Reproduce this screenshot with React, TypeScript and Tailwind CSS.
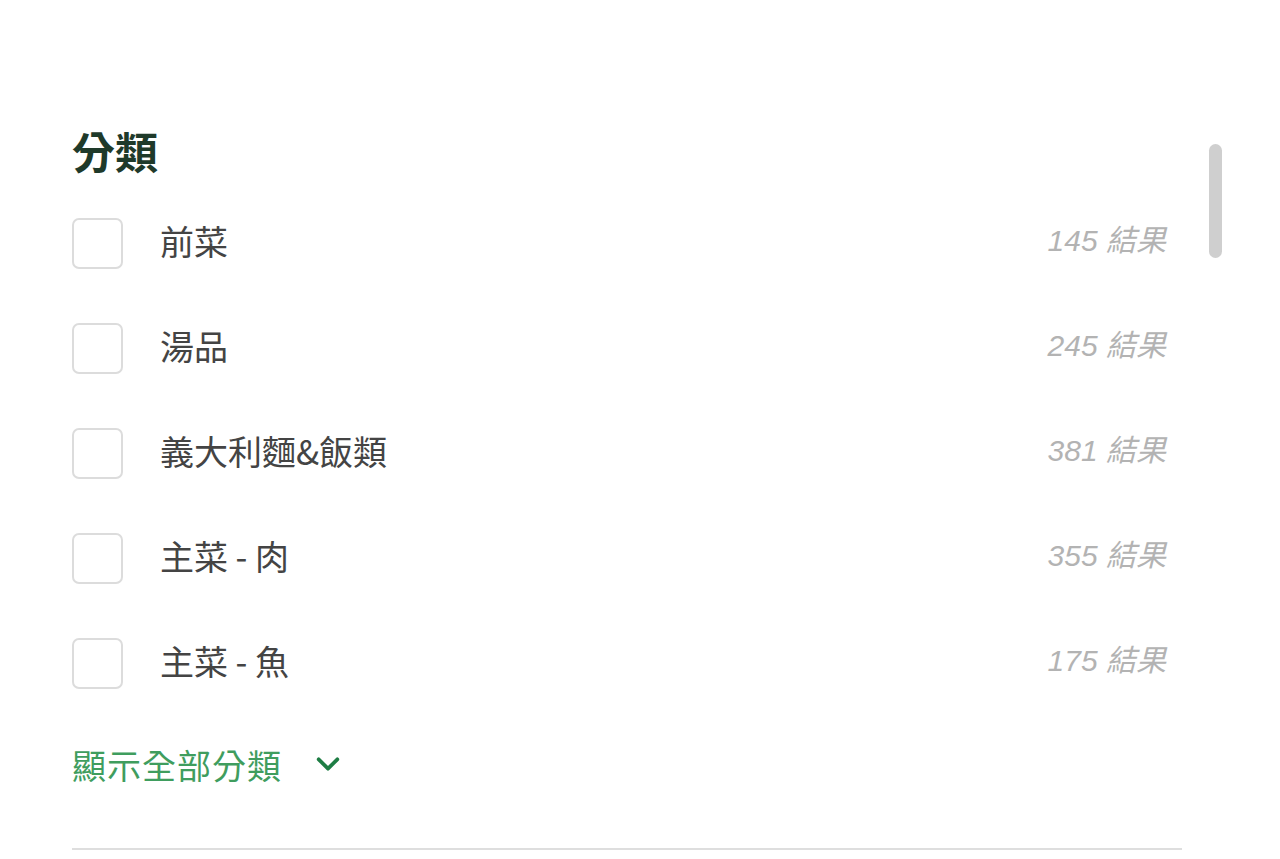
import { useState } from "react";

const categories = [
  { name: "前菜", count: 145 },
  { name: "湯品", count: 245 },
  { name: "義大利麵&飯類", count: 381 },
  { name: "主菜 - 肉", count: 355 },
  { name: "主菜 - 魚", count: 175 },
];

const font = { fontFamily: '"Noto Sans CJK TC", "Noto Sans", sans-serif' };
const countFont = { fontFamily: '"Liberation Sans", "Noto Sans CJK TC", sans-serif' };

export default function App() {
  const [checked, setChecked] = useState<Record<string, boolean>>({});

  return (
    <div className="relative h-[859px] w-[1280px] overflow-hidden bg-white" style={font}>
      <div className="absolute left-[1209px] top-[144px] h-[114px] w-[13px] rounded-full bg-[#cfcfcf]" />

      <div className="flex w-[1182px] flex-col pl-[72px] pt-[124px]">
        <h2 className="h-[52px] text-[43px] leading-[52px] font-semibold text-[#1f3a2a]">分類</h2>

        <ul className="mt-[15px] flex flex-col">
          {categories.map((c) => (
            <li key={c.name} className="flex h-[105px] items-center pr-4">
              <button
                onClick={() => setChecked({ ...checked, [c.name]: !checked[c.name] })}
                className="h-[51px] w-[51px] shrink-0 rounded-[7px] border-2 border-[#dcdcdc] bg-white"
              />
              <span className="ml-[37px] -translate-y-[3px] text-[34px] text-[#444444]">{c.name}</span>
              <span className="ml-auto -translate-y-[3px] text-[30px] italic text-[#b3b3b3]" style={countFont}>
                {c.count} 結果
              </span>
            </li>
          ))}
        </ul>

        <button className="mt-[13px] flex h-[70px] items-center text-[34px] text-[#3f9d5e]">
          <span className="tracking-[1px]">顯示全部分類</span>
          <svg
            className="ml-[32px] h-[28px] w-[28px]"
            viewBox="0 0 24 24"
            fill="none"
            stroke="#1e7d44"
            strokeWidth="3.2"
            strokeLinecap="round"
            strokeLinejoin="round"
          >
            <path d="M4 8l8 8 8-8" />
          </svg>
        </button>

        <div className="mt-[49px] h-[2px] w-full bg-[#dedede]" />
      </div>
    </div>
  );
}
